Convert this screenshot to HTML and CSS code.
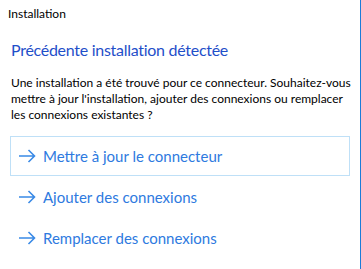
FILE: index.html
```html
<!DOCTYPE html>
<html lang="fr">
<head>
<meta charset="utf-8">
<link rel="stylesheet" href="styles.css">
</head>
<body>
<div class="window">
  <div class="title">Installation</div>
  <h1 class="heading">Précédente installation détectée</h1>
  <p class="message">Une installation a été trouvé pour ce connecteur. Souhaitez-vous<br>mettre à jour l'installation, ajouter des connexions ou remplacer<br>les connexions existantes ?</p>
  <div class="options">
    <div class="option selected">
      <svg class="arrow" width="18" height="14" viewBox="0 0 18 14"><path d="M1 7H16.5M10.5 1L16.5 7L10.5 13" fill="none" stroke="currentColor" stroke-width="1.6"/></svg>
      <span>Mettre à jour le connecteur</span>
    </div>
    <div class="option">
      <svg class="arrow" width="18" height="14" viewBox="0 0 18 14"><path d="M1 7H16.5M10.5 1L16.5 7L10.5 13" fill="none" stroke="currentColor" stroke-width="1.6"/></svg>
      <span>Ajouter des connexions</span>
    </div>
    <div class="option">
      <svg class="arrow" width="18" height="14" viewBox="0 0 18 14"><path d="M1 7H16.5M10.5 1L16.5 7L10.5 13" fill="none" stroke="currentColor" stroke-width="1.6"/></svg>
      <span>Remplacer des connexions</span>
    </div>
  </div>
</div>
</body>
</html>
```
FILE: styles.css
```css
* { box-sizing: border-box; }
html, body { margin: 0; padding: 0; background: #fff; }
body { font-family: "Lato", "Open Sans", sans-serif; color: #000; }
.window {
  width: 361px;
  height: 269px;
  border-right: 1px solid #1b7cd8;
  padding: 6px 10px 0 10px;
  overflow: hidden;
}
.title {
  font-size: 12px;
  line-height: 16px;
  margin-left: -2px;
}
.heading {
  margin: 17px 0 0 1px;
  font-size: 16px;
  line-height: 22px;
  font-weight: normal;
  letter-spacing: -0.28px;
  color: #1f4fc9;
}
.message {
  margin: 14px 0 0 1px;
  font-size: 12px;
  line-height: 16px;
  white-space: nowrap;
}
.options {
  margin-top: 13px;
  display: flex;
  flex-direction: column;
  gap: 1px;
}
.option {
  height: 40px;
  display: flex;
  align-items: center;
  gap: 7px;
  padding-left: 7px;
  border: 1px solid transparent;
  color: #2e7ae0;
  font-size: 15px;
}
.option.selected { border-color: #bfe0f7; }
.arrow { color: #3a8ae6; flex: none; }
```
